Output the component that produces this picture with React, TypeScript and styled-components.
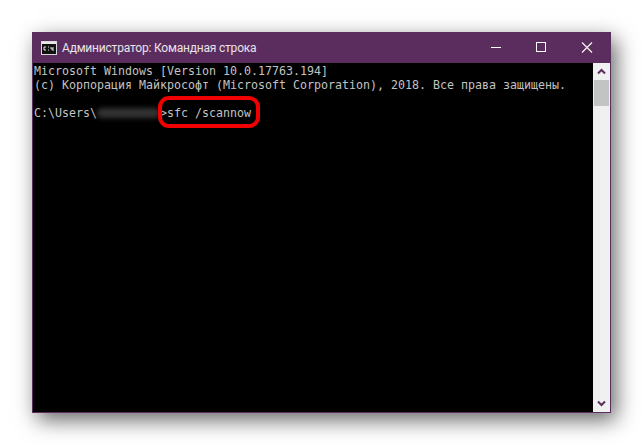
import React from "react";
import styled, { createGlobalStyle } from "styled-components";

const Global = createGlobalStyle`
  html, body { margin: 0; padding: 0; background: #fff; }
`;

const Page = styled.div`
  width: 643px;
  height: 446px;
  box-sizing: border-box;
  padding: 32px 32px 33px 32px;
  overflow: hidden;
`;

const Window = styled.div`
  width: 579px;
  height: 381px;
  box-sizing: border-box;
  display: flex;
  flex-direction: column;
  border: 1px solid #5a2d5e;
  border-top: 0;
  background: #000;
  box-shadow: 5px 7px 20px rgba(0, 0, 0, 0.6);
`;

const TitleBar = styled.div`
  height: 31px;
  flex: none;
  display: flex;
  align-items: center;
  background: #5a2d5e;
  color: #e9e3ea;
  padding-left: 8px;
  font: 12px Roboto, "Noto Sans", sans-serif;
`;

const AppIcon = styled.svg`
  width: 16px;
  height: 14px;
  margin-right: 5px;
  flex: none;
`;

const Title = styled.div`
  flex: 1;
  white-space: nowrap;
  letter-spacing: -0.2px;
`;

const Controls = styled.div`
  display: flex;
  align-items: center;
  height: 100%;
`;

const Control = styled.svg`
  width: 46px;
  height: 31px;
  display: block;
`;

const Body = styled.div`
  flex: 1;
  display: flex;
  min-height: 0;
`;

const Console = styled.div`
  flex: 1;
  position: relative;
  padding: 1px 0 0 1px;
  color: #c3c3c3;
  font: 11.63px/14px "DejaVu Sans Mono", monospace;
  white-space: pre;
`;

const Line = styled.div`
  height: 14px;
`;

const Blur = styled.span`
  display: inline-block;
  width: 63px;
  height: 10px;
  vertical-align: -1px;
  background: #333;
  border-radius: 5px;
  filter: blur(2.5px);
`;

const Ring = styled.div`
  position: absolute;
  left: 125px;
  top: 33px;
  width: 102px;
  height: 32px;
  box-sizing: border-box;
  border: 4px solid #f00000;
  border-radius: 11px;
`;

const Scrollbar = styled.div`
  width: 17px;
  flex: none;
  display: flex;
  flex-direction: column;
  background: #f0f0f0;
`;

const Arrow = styled.svg`
  width: 17px;
  height: 17px;
  flex: none;
  display: block;
`;

const Thumb = styled.div`
  height: 26px;
  flex: none;
  margin: 0 1px;
  background: #c1c4c3;
`;

const Track = styled.div`
  flex: 1;
`;

export default function App() {
  return (
    <Page>
      <Global />
      <Window>
        <TitleBar>
          <AppIcon viewBox="0 0 16 14">
            <rect x="0.5" y="0.5" width="15" height="13" fill="#111" stroke="#d8d8d8" />
            <rect x="1" y="1" width="14" height="2" fill="#e8e8e8" />
            <path d="M3 6h2M3 6v3M3 9h2M7 6h1M7 9h1M10 6v2h2M12 6v4" stroke="#e8e8e8" fill="none" />
          </AppIcon>
          <Title>Администратор: Командная строка</Title>
          <Controls>
            <Control viewBox="0 0 46 31">
              <path d="M19 15.5h10" stroke="#fff" strokeWidth="1" />
            </Control>
            <Control viewBox="0 0 46 31">
              <rect x="18.5" y="10.5" width="9" height="9" fill="none" stroke="#fff" />
            </Control>
            <Control viewBox="0 0 46 31">
              <path d="M18 10.5l10 10M28 10.5l-10 10" stroke="#f0f0e8" strokeWidth="1.3" />
            </Control>
          </Controls>
        </TitleBar>
        <Body>
          <Console>
            <Line>Microsoft Windows [Version 10.0.17763.194]</Line>
            <Line>(c) Корпорация Майкрософт (Microsoft Corporation), 2018. Все права защищены.</Line>
            <Line> </Line>
            <Line>C:\Users\<Blur />&gt;sfc /scannow</Line>
            <Ring />
          </Console>
          <Scrollbar>
            <Arrow viewBox="0 0 17 17">
              <path d="M5 10.5l3.5-3.5 3.5 3.5" fill="none" stroke="#5a2d5e" strokeWidth="2" />
            </Arrow>
            <Thumb />
            <Track />
            <Arrow viewBox="0 0 17 17">
              <path d="M5 6.5l3.5 3.5 3.5-3.5" fill="none" stroke="#5a2d5e" strokeWidth="2" />
            </Arrow>
          </Scrollbar>
        </Body>
      </Window>
    </Page>
  );
}
